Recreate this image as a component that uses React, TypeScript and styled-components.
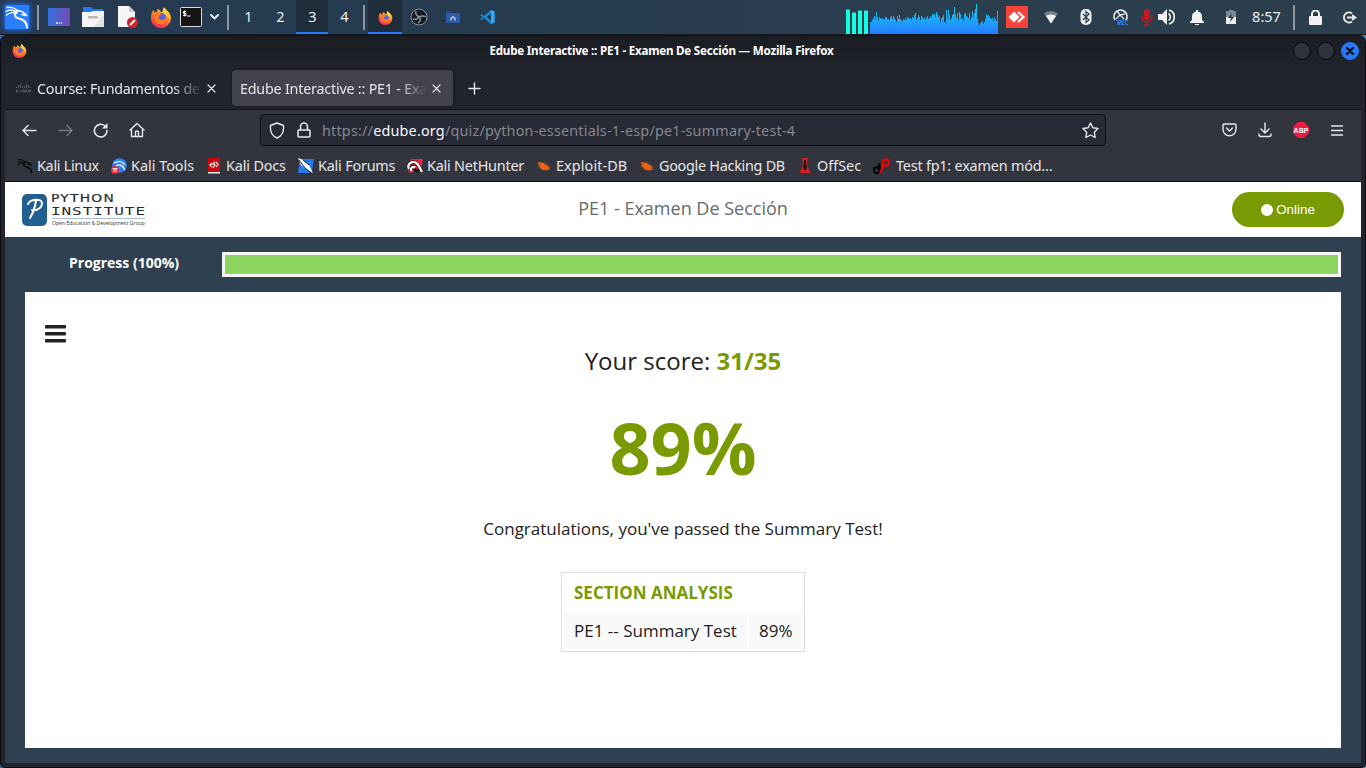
import React from "react";
import styled, { createGlobalStyle } from "styled-components";

const Global = createGlobalStyle`
  *{box-sizing:border-box}
  html,body{margin:0;padding:0;background:#2b4a5c;overflow:hidden}
  svg{display:block;flex:none}
`;
const ui = `"Noto Sans","Open Sans",sans-serif`;
const web = `"Open Sans","Noto Sans",sans-serif`;

const Desktop = styled.div`
  width:1366px;height:768px;display:flex;flex-direction:column;overflow:hidden;
  background:linear-gradient(90deg,#3e62b8,#2f5a6a 50%,#3a8cc0);font-family:${ui};
`;
const Panel = styled.header`
  height:35px;display:flex;flex:none;border-bottom:1px solid #15191f;
  background:linear-gradient(90deg,#263a52,#283c4f 45%,#2c3f4c);
`;
const Slot = styled.div<{ $w: number; $active?: boolean; $pad?: number }>`
  width:${p => p.$w}px;height:34px;flex:none;display:flex;align-items:center;justify-content:center;
  padding-left:${p => p.$pad ?? 0}px;
  color:#e9edf0;font-size:14.5px;
  background:${p => (p.$active ? "#1f2c3a" : "transparent")};
  box-shadow:${p => (p.$active ? "inset 0 -2px #2777ff" : "none")};
`;
const Digit = styled.span`padding:0 0 2px 1px;`;
const Rule = styled.i`width:2px;height:25px;background:#8d97a2;`;
const Fill = styled.div`flex:1;`;
const KaliTile = styled.div`
  width:24px;height:24px;background:#2a7fff;border-radius:1px;box-shadow:0 0 5px 1px #1d6ef5;
`;
const Meter = styled.div`width:24px;height:34px;display:flex;align-items:flex-end;gap:2px;`;
const MeterBar = styled.i<{ $h: number }>`width:4px;height:${p => p.$h}px;background:#0fffe0;border-top:1px solid #2c8f92;`;

const Frame = styled.section`
  flex:1;display:flex;flex-direction:column;background:#22242d;border:1px solid #0b0c11;border-top-color:#101217;
  border-radius:7px 7px 5px 5px;padding:0 4px 4px;min-height:0;
`;
const TitleBar = styled.div`
  height:30px;flex:none;display:flex;align-items:center;padding:0 0 1px 7px;margin:0 -4px;
  background:linear-gradient(#1a1c23,#22242d);border-radius:6px 6px 0 0;
`;
const TitleText = styled.div`
  flex:1;text-align:center;color:#fff;font:700 11.6px ${ui};letter-spacing:-.22px;white-space:nowrap;
  padding:0 0 1px;
`;
const WinButtons = styled.div`display:flex;gap:6px;padding-right:6px;`;
const WinButton = styled.div<{ $close?: boolean }>`
  width:18px;height:18px;border-radius:50%;display:grid;place-items:center;
  background:${p => (p.$close ? "#2777ff" : "#30323d")};
  border:1px solid ${p => (p.$close ? "#2777ff" : "#08090c")};
`;
const Tabs = styled.div`height:43px;flex:none;display:flex;align-items:center;padding:1px 0 0 5px;`;
const Tab = styled.div<{ $w: number; $on?: boolean }>`
  width:${p => p.$w}px;height:36px;display:flex;align-items:center;border-radius:4px;flex:none;
  padding:0 ${p => (p.$on ? 12 : 16)}px 0 ${p => (p.$on ? 8 : 5)}px;gap:5px;
  background:${p => (p.$on ? "#42434c" : "transparent")};
  box-shadow:${p => (p.$on ? "0 0 3px #111" : "none")};
`;
const TabText = styled.span<{ $track?: number }>`
  flex:1;overflow:hidden;white-space:nowrap;font-size:14.3px;color:#e6e6e8;letter-spacing:${p => p.$track ?? 0}px;
  mask-image:linear-gradient(90deg,#000 calc(100% - 29px),transparent);
`;
const Toolbars = styled.div`background:#33353e;border-top:1px solid #14151b;border-bottom:1px solid #08080c;height:73px;flex:none;`;
const NavBar = styled.div`height:40px;display:flex;align-items:center;padding-left:6px;`;
const NavSlot = styled.div<{ $w?: number }>`width:${p => p.$w ?? 36}px;display:flex;justify-content:center;flex:none;`;
const Url = styled.div`
  width:846px;height:32px;margin-left:105px;margin-right:105px;border:1px solid #0f1015;border-radius:4px;background:#282a36;
  display:flex;align-items:center;padding:0 6px;flex:none;
`;
const UrlText = styled.span`flex:1;margin-left:8px;color:#85878e;font-size:14.4px;letter-spacing:.19px;white-space:nowrap;b{font-weight:400;color:#fbfbfe}`;
const Bookmarks = styled.div`height:31px;display:flex;align-items:center;padding-left:12px;`;
const Bookmark = styled.div<{ $w: number; $track: number }>`
  width:${p => p.$w}px;display:flex;align-items:center;gap:4px;white-space:nowrap;flex:none;
  font-size:14.4px;color:#e6e6e8;letter-spacing:${p => p.$track}px;
`;

const Page = styled.main`flex:1;display:flex;flex-direction:column;background:#2f4050;font-family:${web};min-height:0;`;
const SiteHeader = styled.div`height:55px;flex:none;background:#fff;display:flex;align-items:center;padding:0 17px;justify-content:space-between;`;
const Brand = styled.div`width:140px;display:flex;`;
const Heading = styled.h1`margin:0;font:400 18px ${web};color:#676a6c;padding-bottom:3px;`;
const Online = styled.div`
  width:112px;height:35px;border-radius:18px;background:#7a9a01;color:#fff;display:flex;align-items:center;justify-content:center;
  gap:3px;font:13.4px "Liberation Sans",Arial,sans-serif;
`;
const HeaderSide = styled.div`width:140px;display:flex;justify-content:flex-end;`;
const Dot = styled.i`width:12px;height:12px;border-radius:50%;background:#fff;`;
const ProgressRow = styled.div`height:55px;flex:none;display:flex;align-items:center;padding:0 20px 0 0;`;
const ProgressLabel = styled.div`width:217px;padding-left:64px;color:#fff;font:700 14px ${web};padding-bottom:5px;`;
const Track = styled.div`flex:1;height:25px;border:3px solid #f5f5f5;background:#8cd460;`;
const Card = styled.div`
  margin:0 20px 15px;flex:1;background:#fff;color:#222;display:flex;flex-direction:column;align-items:center;min-height:0;
`;
const MenuRow = styled.div`width:100%;height:52px;padding:32.7px 0 0 20px;`;
const MenuIcon = styled.svg.attrs({ width: 21, height: 18, viewBox: "0 0 21 18" })`fill:#222;`;
const Score = styled.div`font-size:24px;line-height:34px;b{color:#7a9a01}`;
const Percent = styled.div`font-size:72px;font-weight:700;line-height:98px;color:#7a9a01;margin-top:20px;`;
const Message = styled.div`font-size:17px;line-height:24px;margin-top:21px;`;
const Analysis = styled.div`width:244px;height:80px;margin-top:31px;border:1px solid #ddd;padding:2px;font-size:17px;`;
const AnalysisHead = styled.div`height:38px;line-height:35px;padding-left:10px;color:#7a9a01;font-weight:700;white-space:nowrap;`;
const AnalysisRow = styled.div`display:flex;gap:2px;`;
const Cell = styled.div<{ $w: number }>`width:${p => p.$w}px;height:36px;line-height:35px;padding-left:10px;background:#f9f9f9;white-space:nowrap;`;

const line = { fill: "none", stroke: "#e8e8ec", strokeWidth: 1.4, strokeLinecap: "round", strokeLinejoin: "round" } as const;

const Dragon = ({ size, color }: { size: number; color: string }) => (
  <svg width={size} height={size} viewBox="0 0 24 24" fill="none" stroke={color} strokeLinecap="round" strokeLinejoin="round">
    <path d="M1 6.500C5 4 9 5 12 8M2 2.500C6 2 10 3 13 6M1.500 10C5 7 8 7 11 8.500" strokeWidth="1.300" />
    <path d="M11.500 7C9 10 9.500 12.500 14 13.500C19 14.500 21.500 17 22 22.500" strokeWidth="2" />
    <path d="M11 6C15 5 18.500 7 21.500 10.500L17 9.500" strokeWidth="1.700" />
  </svg>
);
const Firefox = ({ size }: { size: number }) => (
  <svg width={size} height={size} viewBox="0 0 24 24">
    <defs>
      <linearGradient id="fox" x1=".8" y1="0" x2=".3" y2="1"><stop stopColor="#fff04a" /><stop offset=".35" stopColor="#ffa22b" /><stop offset=".7" stopColor="#ff5636" /><stop offset="1" stopColor="#e8286b" /></linearGradient>
    </defs>
    <path d="M15 1C17 4 22 6 23 12C23 19 18 24 12 24C5 24 1 19 1 13C1 9 2 6 4 4L5 7L8 6L8 3C11 4 11 6 13 7C14 5 14 3 15 1Z" fill="url(#fox)" />
    <circle cx="12.500" cy="12.500" r="5" fill="#5865d8" />
    <path d="M4 8C8 5 11 7 12 9.500C9.500 10 9 12 10 14C12 17 17 15 18 11C20 17 16 20 12 20C6 20 3 15 4 8Z" fill="#ff7a29" />
    <path d="M15 2C17 7 21 8 21 14C20 12 18 9 14 8Z" fill="#ffd03b" />
  </svg>
);
const Obs = () => (
  <svg width="18" height="18" viewBox="0 0 18 18" fill="none" stroke="#8b969e">
    <circle cx="9" cy="9" r="8" fill="#141b24" strokeWidth="1" />
    <path d="M6 3C5 6 7 8.500 9 8.500C11.500 8.500 13 7 15.500 9M9 8.500C11 10.500 11 13 8 15M9 8.500C7.500 11.500 5 12 3 10.500" strokeWidth="1.500" />
  </svg>
);
const Close = () => <svg width="9" height="9" viewBox="0 0 9 9"><path d="M1 1L8 8M8 1L1 8" {...line} strokeWidth={1.2} /></svg>;
const Beetle = () => (
  <svg width="16" height="16" viewBox="0 0 16 16"><path d="M2 4.500C5 3.500 8 5 11 7C14 8.500 14.500 11.500 12 12C9 13 5 12 3 8.500Z" fill="#f26412" /><path d="M1 4L5 7M1 9L5 9M4 12L7 10M8 3L9 7M12 5L10 8M15 8L11 9M15 12L11 10M10 14L9 11" stroke="#9a4a22" strokeWidth=".6" /></svg>
);

const samples = [12,12,14,16,18,15,22,17,14,17,16,15,16,14,15,17,17,15,15,14,17,18,15,18,16,14,12,18,15,19,15,14,13,15,14,16,14,17,16,15,16,14,17,16,19,21,14,16,19,17,14,18,17,15,17,14,16,18,15,16,18,16,20,19,20,17,22,20,17,18,12,16,17,19,12,11,24,15,24,19,14,16,19,20,27,19,16,21,14,22,20,15,16,13,20,21,18,17,16,21,14,17,23,16,21,25,30,15,11,9,11,12,13,10,12,15,20,18,19,17,16,15,16,13,17,15,13,23];
const Spectrum = () => (
  <svg width="128" height="34" viewBox="0 0 128 34" shapeRendering="crispEdges">
    <defs><linearGradient id="spec" gradientUnits="userSpaceOnUse" x1="0" y1="4" x2="0" y2="34"><stop stopColor="#10d7ee" /><stop offset="1" stopColor="#267bff" /></linearGradient></defs>
    <path fill="url(#spec)" d={"M0 34" + samples.map((h, i) => `V${34 - h}H${i + 1}`).join("") + "V34Z"} />
  </svg>
);

const bookmarks: [string, number, number, React.ReactNode][] = [
  ["Kali Linux", 94, -0.3, <Dragon size={16} color="#050506" />],
  ["Kali Tools", 95, 0, <svg width="16" height="16" viewBox="0 0 16 16"><circle cx="8.500" cy="7.500" r="7.300" fill="#2a7fff" /><path d="M3 5C8 2 12 4 14 7M5 8C9 5 12 8 14 12" stroke="#fff" strokeWidth="1.200" fill="none" /><circle cx="4" cy="12" r="4" fill="#ee2c35" /><path d="M1.500 10.500H6.500M3 10.500V14M5 10.500V14" stroke="#fff" strokeWidth=".9" /></svg>],
  ["Kali Docs", 92, -0.15, <svg width="16" height="16" viewBox="0 0 16 16"><path d="M2 0H14V15H2Z" fill="#c9080d" /><path d="M2 14H14V15.500H2Z" fill="#eee" /><path d="M6 5L4 7L6 9M10 4L12 6.500L10 9M9 4L7 6L9 7L7 10" stroke="#fff" strokeWidth="1.200" fill="none" /></svg>],
  ["Kali Forums", 109, -0.2, <svg width="16" height="16" viewBox="0 0 16 16"><path d="M2 1H16L13.500 15H0Z" fill="#237bec" /><path d="M0 0L5 2L11 7L15 15L8 11L3 7Z" fill="#fff" /><path d="M1 2L7 10L13 15M5 2L11 7" stroke="#111" strokeWidth=".9" fill="none" /></svg>],
  ["Kali NetHunter", 129, -0.22, <svg width="16" height="16" viewBox="0 0 16 16"><path d="M4 1H16L14 12L3 15L0 11Z" fill="#e8233c" /><path d="M2 11C0 7 3 4 6.500 4C11 4 12 9 15 14M4.500 12.500C3 9 6 7.500 7.500 9M7 11C8 12.500 10 13 12 13" fill="none" stroke="#15161a" strokeWidth="3.400" /><path d="M2 11C0 7 3 4 6.500 4C11 4 12 9 15 14M4.500 13C3 9.500 6 8 8 9.500" fill="none" stroke="#fff" strokeWidth="2.200" /></svg>],
  ["Exploit-DB", 103, 0.1, <Beetle />],
  ["Google Hacking DB", 158, -0.28, <Beetle />],
  ["OffSec", 76, 0, <svg width="16" height="16" viewBox="0 0 16 16"><path d="M5 0H11L10 5L11 10L14 15H2L5 10L6 5Z" fill="#cf2023" /><path d="M7 2H9V6L10 9L8 13L6 9L7 6Z" fill="#250d0f" /></svg>],
  ["Test fp1: examen mód…", 180, -0.2, <svg width="19" height="16" viewBox="0 0 19 16" fill="none" strokeWidth="2.200"><path d="M6.500 5V12.500C6.500 16 .5 16 .9 12C1 8.500 6.500 8.500 6.500 12.500" stroke="#050505" /><path d="M6.500 14.500C9 14 9.500 11 9.500 6C9.500 0 16.500 0 16 5C15.500 9 11 8 10 6" stroke="#ed0000" /></svg>],
];

export default function App() {
  return (
    <Desktop>
      <Global />
      <Panel>
        <Slot $w={34}><KaliTile><Dragon size={24} color="#fff" /></KaliTile></Slot>
        <Slot $w={8}><Rule /></Slot>
        <Slot $w={34}><svg width="22" height="18" viewBox="0 0 22 18"><defs><linearGradient id="desk"><stop stopColor="#3272df" /><stop offset="1" stopColor="#764bb2" /></linearGradient></defs><path fill="url(#desk)" d="M0 0H22V18H0Z" /><path d="M8 15H10M11 15H12M13 15H14" stroke="#fff" strokeWidth="1.500" /></svg></Slot>
        <Slot $w={34}><svg width="22" height="20" viewBox="0 0 22 20"><path d="M1 0H9L11 2H21V8H1Z" fill="#2777ef" /><path d="M0 5H9L11 4H22V20H0Z" fill="#f4f4f4" /><path d="M22 8V20H11Z" fill="#e2e2e2" /><rect x="6" y="9" width="10" height="2.500" rx="1" fill="#b7b7b7" /></svg></Slot>
        <Slot $w={35}><svg width="21" height="22" viewBox="0 0 21 22"><path d="M1 0H12L18 6V21H1Z" fill="#f6f6f6" /><path d="M12 0V6H18Z" fill="#c9c9c9" /><circle cx="15.500" cy="16.500" r="5.500" fill="#d3232a" /><path d="M13 19L18 14" stroke="#fff" strokeWidth="2" /></svg></Slot>
        <Slot $w={32}><Firefox size={22} /></Slot>
        <Slot $w={27}><svg width="22" height="20" viewBox="0 0 22 20"><rect x=".5" y=".5" width="21" height="19" rx="1" fill="#151515" stroke="#ddd" /><path d="M6 4.500H3.500V6.500H6V8.500H3M4.700 3.500V9.500M7 9H10.500" stroke="#fff" fill="none" /></svg></Slot>
        <Slot $w={20}><svg width="9" height="6" viewBox="0 0 9 6"><path d="M1 1L4.500 4.500L8 1" {...line} strokeWidth={2} /></svg></Slot>
        <Slot $w={8}><Rule /></Slot>
        <Slot $w={32}><Digit>1</Digit></Slot>
        <Slot $w={32}><Digit>2</Digit></Slot>
        <Slot $w={32} $active><Digit>3</Digit></Slot>
        <Slot $w={32}><Digit>4</Digit></Slot>
        <Slot $w={8}><Rule /></Slot>
        <Slot $w={34} $active><Firefox size={15} /></Slot>
        <Slot $w={34}><Obs /></Slot>
        <Slot $w={34}><svg width="14" height="12" viewBox="0 0 14 12"><path d="M0 1H5L6 2H14V12H0Z" fill="#2e5ca8" /><path d="M0 0H5L6 2H0Z" fill="#244b8d" /><path d="M4 7L7 4.500L10 7V9.500H8V7.500H6V9.500H4Z" fill="#9daecb" /></svg></Slot>
        <Slot $w={34}><svg width="15" height="14" viewBox="0 0 15 14"><path d="M11 0L14.500 1.500V12.500L11 14L4 8L1.500 10L0 9L3 7L0 5L1.500 4L4 6Z" fill="#168bdc" /><path d="M11 3.500L6.500 7L11 10.500Z" fill="#253a4c" /><path d="M11 0L14.500 1.500V12.500L11 14Z" fill="#33a8f3" /></svg></Slot>
        <Fill />
        <Meter><MeterBar $h={25} /><MeterBar $h={22} /><MeterBar $h={24} /><MeterBar $h={24} /></Meter>
        <Spectrum />
        <Slot $w={34} $pad={4}><svg width="22" height="22" viewBox="0 0 22 22"><path d="M0 0H22V22H0Z" fill="#f9423a" /><path d="M2.500 11L8 5.500L13.500 11L8 16.500Z" fill="#fff" /><path d="M12 6L17.500 11L12 16" fill="none" stroke="#fff" strokeWidth="2.200" /></svg></Slot>
        <Slot $w={38}><svg width="14" height="14" viewBox="0 0 14 14"><path d="M0 3.500C4 0 10 0 14 3.500L7 13.500Z" fill="#74818a" /><path d="M2 6C5 4 9 4 12 6L7 13.500Z" fill="#f1f1f1" /></svg></Slot>
        <Slot $w={32}><svg width="12" height="16" viewBox="0 0 12 16"><rect x=".5" width="11" height="16" rx="5" fill="#eee" /><path d="M3 5L9 11L6 13.500V2.500L9 5L3 11" stroke="#2c3f4c" strokeWidth="1.200" fill="none" /></svg></Slot>
        <Slot $w={36}><svg width="17" height="18" viewBox="0 0 17 18" fill="none"><path d="M3 12A6.500 6.500 0 1 1 14 12" stroke="#eee" strokeWidth="1.700" /><path d="M5 3L8 7L13 6M8 7L4 11M8 7L12 11" stroke="#d9dddf" strokeWidth="1.400" /><path d="M6 17V12.500H8.500V14.500H6L8.500 17M12 12.500H10V16.500H12M10 14.500H12M16 12.500H13.500V16.500H16" stroke="#2e77ed" strokeWidth="1.200" /></svg></Slot>
        <Slot $w={18}><svg width="12" height="17" viewBox="0 0 12 17"><rect x="3" width="6" height="11" rx="3" fill="#c8171e" /><path d="M1 6V8C1 14 11 14 11 8V6M6 12V16M3 16H9" stroke="#c8171e" strokeWidth="1.500" fill="none" /></svg></Slot>
        <Slot $w={20}><svg width="17" height="16" viewBox="0 0 17 16"><path d="M0 5H4L9 0V16L4 11H0Z" fill="#f1f1f1" /><path d="M10.500 4.500C13 6 13 10 10.500 11.500M11 1C18 3 18 13 11 15" stroke="#f1f1f1" strokeWidth="1.700" fill="none" /></svg></Slot>
        <Slot $w={42}><svg width="14" height="15" viewBox="0 0 14 15"><path d="M6 0H8L8 1.500C11 2 12 4 12 7V10L14 12V13H0V12L2 10V7C2 4 3 2 6 1.500ZM5 14H9V15H5Z" fill="#f1f1f1" /></svg></Slot>
        <Slot $w={26}><svg width="10" height="14" viewBox="0 0 10 14"><path d="M0 1H3V0H7V1H10V7H0Z" fill="#7c8891" /><path d="M0 7H10V14H0Z" fill="#eee" /><path d="M6 3L2 8H5L4 12L8 7H5Z" fill="#263641" /></svg></Slot>
        <Slot $w={44}><Digit>8:57</Digit></Slot>
        <Slot $w={12}><Rule /></Slot>
        <Slot $w={30}><svg width="13" height="15" viewBox="0 0 13 15"><rect y="6" width="13" height="9" rx="1" fill="#f1f1f1" /><path d="M3 7V4A3.500 3.500 0 0 1 10 4V7" fill="none" stroke="#f1f1f1" strokeWidth="2" /></svg></Slot>
        <Slot $w={36} $pad={3}><svg width="15" height="13" viewBox="0 0 15 13"><path d="M10 2.500A5 5 0 1 0 10 10.500" fill="none" stroke="#e6e6e6" strokeWidth="2" /><path d="M5 5.500H10V3L15 6.500L10 10V7.500H5Z" fill="#e6e6e6" /></svg></Slot>
      </Panel>

      <Frame>
        <TitleBar>
          <Slot $w={22}><Firefox size={15} /></Slot>
          <TitleText>Edube Interactive :: PE1 - Examen De Sección — Mozilla Firefox</TitleText>
          <WinButtons>
            <WinButton /><WinButton />
            <WinButton $close><svg width="8" height="8" viewBox="0 0 8 8"><path d="M1 1L7 7M7 1L1 7" stroke="#080c15" strokeWidth="2.200" strokeLinecap="round" /></svg></WinButton>
          </WinButtons>
        </TitleBar>
        <Tabs>
          <Tab $w={222}>
            <svg width="17" height="9" viewBox="0 0 16 9"><path d="M1 3V4M3 1V4M5 0V4M7 2V4M9 2V4M11 0V4M13 1V4M15 3V4M3 6H1V8H3M5 6V8M9 6H7V7H9V8H7M12 6H10V8H12M13 6H15V8H13Z" fill="none" stroke="#5a5b64" /></svg>
            <TabText $track={-0.25}>Course: Fundamentos de P</TabText><Close />
          </Tab>
          <Tab $w={221} $on><TabText $track={-0.2}>Edube Interactive :: PE1 - Exam</TabText><Close /></Tab>
          <NavSlot $w={43}><svg width="13" height="13" viewBox="0 0 13 13"><path d="M6.500 1V12M1 6.500H12" {...line} /></svg></NavSlot>
        </Tabs>
        <Toolbars>
          <NavBar>
            <NavSlot><svg width="15" height="13" viewBox="0 0 15 13"><path d="M14 6.500H1M6 1.500L1 6.500L6 11.500" {...line} /></svg></NavSlot>
            <NavSlot><svg width="15" height="13" viewBox="0 0 15 13"><path d="M1 6.500H14M9 1.500L14 6.500L9 11.500" {...line} stroke="#777982" /></svg></NavSlot>
            <NavSlot><svg width="16" height="16" viewBox="0 0 16 16"><path d="M14 8.500A6.300 6.300 0 1 1 12 4" {...line} strokeWidth={1.6} /><path d="M14.500 1V6.500H9Z" fill="#e8e8ec" /></svg></NavSlot>
            <NavSlot><svg width="16" height="16" viewBox="0 0 16 16"><path d="M1 8L8 1.500L15 8M2.500 7V14.500H13.500V7M6.500 14V10Q6.500 9 8 9Q9.500 9 9.500 10V14" {...line} /></svg></NavSlot>
            <Url>
              <NavSlot $w={19}><svg width="16" height="17" viewBox="0 0 16 17"><path d="M8 1L14.500 3.500C15 9 13 14 8 16C3 14 1 9 1.500 3.500Z" {...line} /></svg></NavSlot>
              <NavSlot $w={8} /><NavSlot $w={20}><svg width="14" height="16" viewBox="0 0 14 16"><path d="M3.500 8V4.500A3.500 3.500 0 0 1 10.500 4.500V8M2 8H12Q13 8 13 9V14Q13 15 12 15H2Q1 15 1 14V9Q1 8 2 8Z" {...line} strokeWidth={1.6} /></svg></NavSlot>
              <UrlText>https://<b>edube.org</b>/quiz/python-essentials-1-esp/pe1-summary-test-4</UrlText>
              <svg width="17" height="17" viewBox="0 0 17 17"><path d="M8.500 1L10.800 5.700L16 6.500L12.300 10.200L13.100 15.500L8.500 13L3.900 15.500L4.700 10.200L1 6.500L6.200 5.700Z" {...line} /></svg>
            </Url>
            <NavSlot><svg width="15" height="14" viewBox="0 0 15 14"><path d="M2 1H13Q14 1 14 2V6C14 15 1 15 1 6V2Q1 1 2 1ZM4.500 5L7.500 8L10.500 5" {...line} /></svg></NavSlot>
            <NavSlot><svg width="14" height="16" viewBox="0 0 14 16"><path d="M7 1V11M3 7L7 11L11 7M1 12V13Q1 14.500 3 14.500H11Q13 14.500 13 13V12" {...line} /></svg></NavSlot>
            <NavSlot><svg width="16" height="16" viewBox="0 0 16 16"><path d="M5 0H11L16 5V11L11 16H5L0 11V5Z" fill="#ee1c3e" /><text x="8" y="11" fontFamily="Liberation Sans" fontWeight="700" fontSize="7.800" fill="#fff" textAnchor="middle" textLength="15" lengthAdjust="spacingAndGlyphs">ABP</text></svg></NavSlot>
            <NavSlot><svg width="12" height="11" viewBox="0 0 12 11"><path d="M0 1H12M0 5.500H12M0 10H12" stroke="#e8e8ec" strokeWidth="1.300" /></svg></NavSlot>
          </NavBar>
          <Bookmarks>
            {bookmarks.map(([label, w, track, icon]) => <Bookmark key={label} $w={w} $track={track}>{icon}{label}</Bookmark>)}
          </Bookmarks>
        </Toolbars>

        <Page>
          <SiteHeader>
            <Brand>
              <svg width="125" height="34" viewBox="0 0 125 34">
                <rect y="1" width="25" height="32" rx="5" fill="#245f91" />
                <path d="M6 11C8 6 20 5 20 10C20 16 13 18 10 17M14 8C13 14 11 20 8 25" fill="none" stroke="#fff" strokeWidth="2" strokeLinecap="round" />
                <g fontFamily="DejaVu Sans" fill="#2b2b2b">
                  <text x="29" y="9" fontSize="11" textLength="64" lengthAdjust="spacingAndGlyphs" letterSpacing="1" stroke="#2b2b2b" strokeWidth=".2">PYTHON</text>
                  <text x="29" y="21.500" fontSize="11" fontFamily="DejaVu Sans Mono" textLength="95" lengthAdjust="spacingAndGlyphs" letterSpacing=".6">INSTITUTE</text>
                </g>
                <path d="M30 25.500H123" stroke="#a8bfd4" />
                <text x="30" y="32" fontFamily="Open Sans" fontSize="5.200" fill="#333" textLength="93" lengthAdjust="spacingAndGlyphs">Open Education &amp; Development Group</text>
              </svg>
            </Brand>
            <Heading>PE1 - Examen De Sección</Heading>
            <HeaderSide><Online><Dot />Online</Online></HeaderSide>
          </SiteHeader>
          <ProgressRow><ProgressLabel>Progress (100%)</ProgressLabel><Track /></ProgressRow>
          <Card>
            <MenuRow>
              <MenuIcon><rect width="21" height="3.500" rx="1" /><rect y="7" width="21" height="3.500" rx="1" /><rect y="14" width="21" height="3.500" rx="1" /></MenuIcon>
            </MenuRow>
            <Score>Your score: <b>31/35</b></Score>
            <Percent>89%</Percent>
            <Message>Congratulations, you've passed the Summary Test!</Message>
            <Analysis>
              <AnalysisHead>SECTION ANALYSIS</AnalysisHead>
              <AnalysisRow><Cell $w={183}>PE1 -- Summary Test</Cell><Cell $w={53}>89%</Cell></AnalysisRow>
            </Analysis>
          </Card>
        </Page>
      </Frame>
    </Desktop>
  );
}
